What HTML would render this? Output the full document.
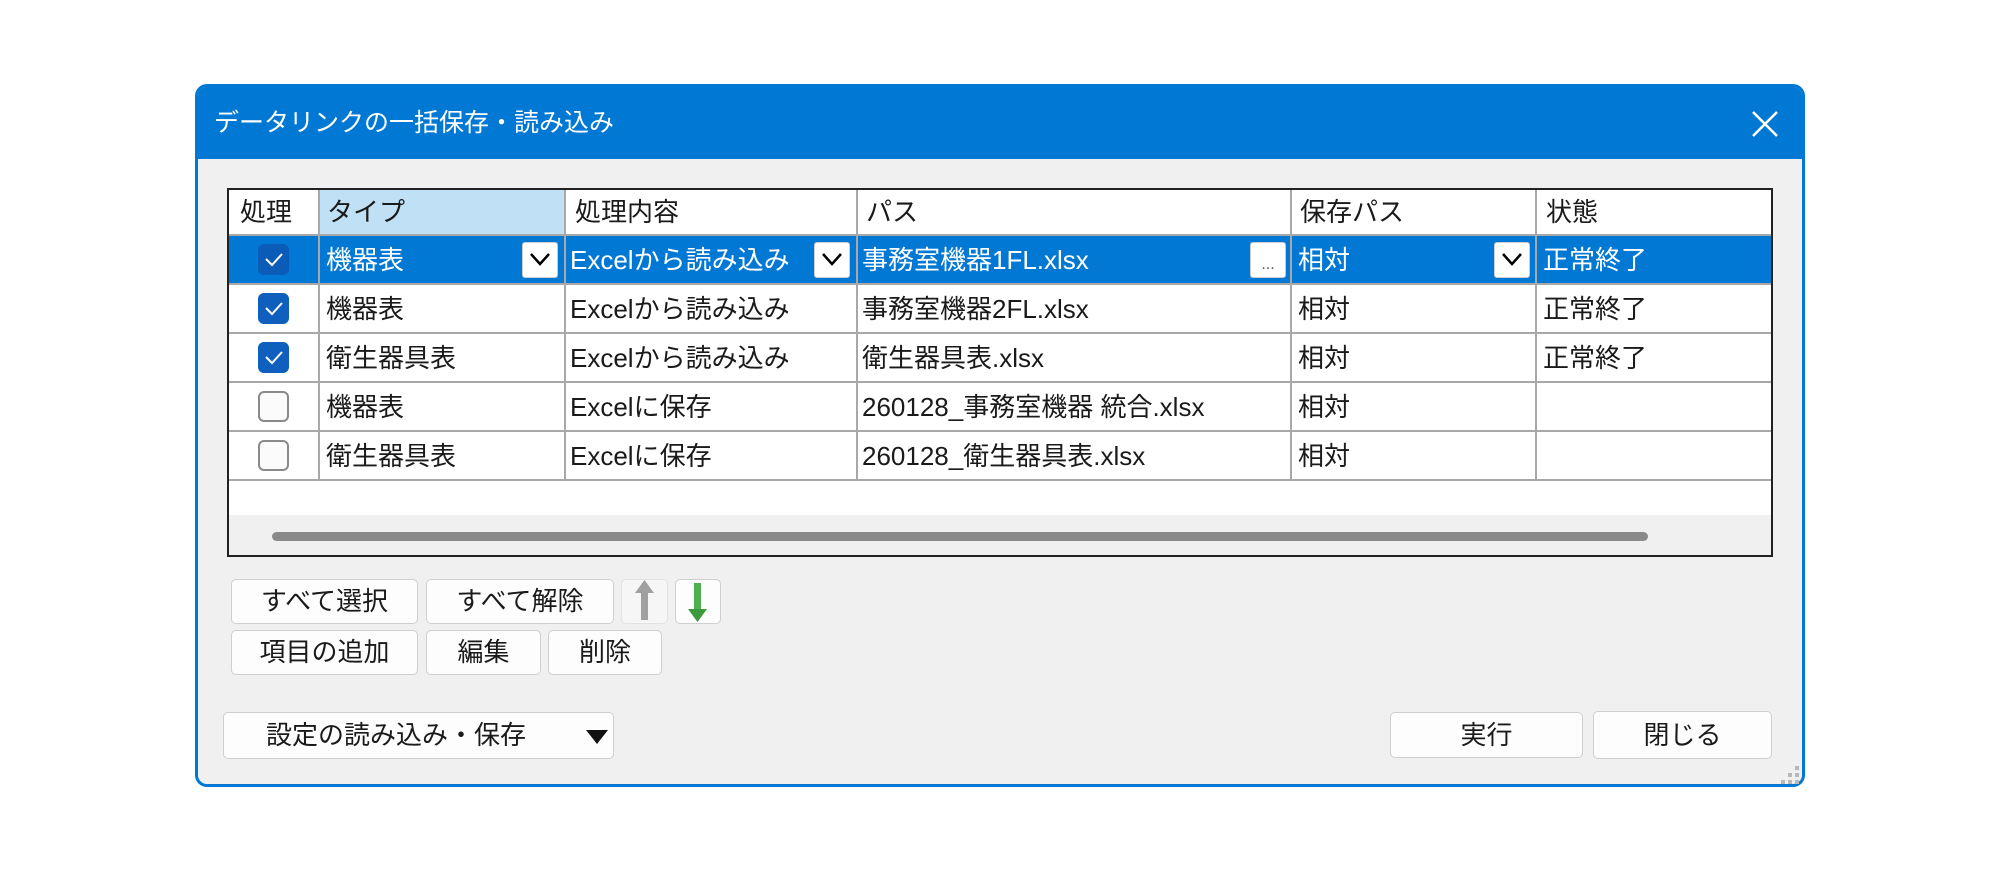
<!DOCTYPE html>
<html><head><meta charset="utf-8"><style>
*{box-sizing:border-box;margin:0;padding:0}
body{width:2000px;height:877px;background:#fff;position:relative;overflow:hidden;font-family:"Liberation Sans","Noto Sans CJK JP",sans-serif;color:#1a1a1a}
.a{position:absolute}
#dlg{left:195px;top:84px;width:1610px;height:703px;border:3px solid #0078d4;border-radius:12px;background:#f0f0f0;overflow:hidden}
#title{left:0;top:0;width:100%;height:72px;background:#0078d4;color:#fff;font-size:25px;line-height:72px;padding-left:16px}
.t{font-size:26px;line-height:48px;white-space:nowrap}
.vl{width:2px;background:#a8a8a8}
.hl{height:2px;background:#a8a8a8}
.cb{width:31px;height:31px;border-radius:6px}
.on{background:#0f5fbf}
.off{background:#fbfbfb;border:2px solid #8a8a8a}
.dd{width:36px;height:36px;background:#fff;border:1px solid #ccc;border-radius:3px}
.btn{background:#fdfdfd;border:1px solid #cfcfcf;border-radius:5px;font-size:26px;text-align:center;color:#1a1a1a}
</style></head><body>
<div class="a" id="dlg">
 <div class="a" id="title">データリンクの一括保存・読み込み</div>
 <svg class="a" style="left:1553px;top:23px" width="28" height="28"><path d="M2 2L26 26M26 2L2 26" stroke="#fff" stroke-width="2.5"/></svg>
</div>
<!-- table -->
<div class="a" style="left:227px;top:188px;width:1546px;height:369px;border:2px solid #222;background:#fff"></div>
<div class="a" style="left:319px;top:190px;width:246px;height:45px;background:#bfe0f5"></div>
<div class="a" style="left:229px;top:236px;width:1542px;height:48px;background:#0078d4"></div>
<div class="a" style="left:229px;top:515px;width:1542px;height:40px;background:#f0f0f0"></div>
<div class="a" style="left:272px;top:532px;width:1376px;height:9px;border-radius:5px;background:#8a8a8a"></div>
<!-- grid -->
<div class="a hl" style="left:229px;top:234px;width:1542px"></div>
<div class="a hl" style="left:229px;top:283px;width:1542px"></div>
<div class="a hl" style="left:229px;top:332px;width:1542px"></div>
<div class="a hl" style="left:229px;top:381px;width:1542px"></div>
<div class="a hl" style="left:229px;top:430px;width:1542px"></div>
<div class="a hl" style="left:229px;top:479px;width:1542px"></div>
<div class="a vl" style="left:318px;top:190px;height:291px"></div>
<div class="a vl" style="left:564px;top:190px;height:291px"></div>
<div class="a vl" style="left:856px;top:190px;height:291px"></div>
<div class="a vl" style="left:1290px;top:190px;height:291px"></div>
<div class="a vl" style="left:1535px;top:190px;height:291px"></div>
<!-- header -->
<div class="a t" style="left:240px;top:188px">処理</div>
<div class="a t" style="left:327px;top:188px">タイプ</div>
<div class="a t" style="left:575px;top:188px">処理内容</div>
<div class="a t" style="left:866px;top:188px">パス</div>
<div class="a t" style="left:1300px;top:188px">保存パス</div>
<div class="a t" style="left:1546px;top:188px">状態</div>
<!-- row1 -->
<div class="a cb" style="left:258px;top:244px;background:#0a5cb8"></div>
<div class="a t" style="left:326px;top:236px;color:#fff">機器表</div>
<div class="a t" style="left:570px;top:236px;color:#fff">Excelから読み込み</div>
<div class="a t" style="left:862px;top:236px;color:#fff">事務室機器1FL.xlsx</div>
<div class="a t" style="left:1298px;top:236px;color:#fff">相対</div>
<div class="a t" style="left:1543px;top:236px;color:#fff">正常終了</div>
<div class="a dd" style="left:522px;top:242px"></div>
<div class="a dd" style="left:814px;top:242px"></div>
<div class="a dd" style="left:1494px;top:242px"></div>
<div class="a dd" style="left:1250px;top:242px;text-align:center;font-size:16px;line-height:44px;color:#555">...</div>
<!-- row2-5 -->
<div class="a cb on" style="left:258px;top:293px"></div>
<div class="a t" style="left:326px;top:285px">機器表</div>
<div class="a t" style="left:570px;top:285px">Excelから読み込み</div>
<div class="a t" style="left:862px;top:285px">事務室機器2FL.xlsx</div>
<div class="a t" style="left:1298px;top:285px">相対</div>
<div class="a t" style="left:1543px;top:285px">正常終了</div>
<div class="a cb on" style="left:258px;top:342px"></div>
<div class="a t" style="left:326px;top:334px">衛生器具表</div>
<div class="a t" style="left:570px;top:334px">Excelから読み込み</div>
<div class="a t" style="left:862px;top:334px">衛生器具表.xlsx</div>
<div class="a t" style="left:1298px;top:334px">相対</div>
<div class="a t" style="left:1543px;top:334px">正常終了</div>
<div class="a cb off" style="left:258px;top:391px"></div>
<div class="a t" style="left:326px;top:383px">機器表</div>
<div class="a t" style="left:570px;top:383px">Excelに保存</div>
<div class="a t" style="left:862px;top:383px">260128_事務室機器 統合.xlsx</div>
<div class="a t" style="left:1298px;top:383px">相対</div>
<div class="a cb off" style="left:258px;top:440px"></div>
<div class="a t" style="left:326px;top:432px">衛生器具表</div>
<div class="a t" style="left:570px;top:432px">Excelに保存</div>
<div class="a t" style="left:862px;top:432px">260128_衛生器具表.xlsx</div>
<div class="a t" style="left:1298px;top:432px">相対</div>
<!-- buttons -->
<div class="a btn" style="left:231px;top:579px;width:187px;height:45px;line-height:43px">すべて選択</div>
<div class="a btn" style="left:426px;top:579px;width:188px;height:45px;line-height:43px">すべて解除</div>
<div class="a btn" style="left:621px;top:579px;width:47px;height:45px;background:#f6f6f6;border-color:#e2e2e2"></div>
<div class="a btn" style="left:675px;top:579px;width:46px;height:45px"></div>
<div class="a btn" style="left:231px;top:630px;width:187px;height:45px;line-height:43px">項目の追加</div>
<div class="a btn" style="left:426px;top:630px;width:115px;height:45px;line-height:43px">編集</div>
<div class="a btn" style="left:548px;top:630px;width:114px;height:45px;line-height:43px">削除</div>
<div class="a btn" style="left:223px;top:712px;width:391px;height:47px;line-height:45px;text-align:left;padding-left:42px">設定の読み込み・保存</div>
<div class="a btn" style="left:1390px;top:712px;width:193px;height:46px;line-height:44px">実行</div>
<div class="a btn" style="left:1593px;top:711px;width:179px;height:48px;line-height:46px">閉じる</div>
<svg class="a" style="left:0;top:0" width="2000" height="877" fill="none">
 <g stroke="#fff" stroke-width="2"><path d="M266 259l6 6 10-11"/><path d="M266 308l6 6 10-11"/><path d="M266 357l6 6 10-11"/></g>
 <g stroke="#000" stroke-width="2.5"><path d="M531 254l9 10 9-10"/><path d="M823 254l9 10 9-10"/><path d="M1503 254l9 10 9-10"/></g>
 <rect x="641" y="590" width="7" height="30" fill="#a0a0a0"/><path d="M635 593l9.5-13 9.5 13z" fill="#a0a0a0"/>
 <rect x="694" y="583" width="7" height="28" fill="#4caf50"/><path d="M688 609l9.5 13 9.5-13z" fill="#3c9a3c"/>
 <path d="M586 730h22l-11 14z" fill="#111"/>
 <g fill="#b8b8b8"><rect x="1795" y="766" width="4" height="4"/><rect x="1795" y="773" width="4" height="4"/><rect x="1788" y="773" width="4" height="4"/><rect x="1795" y="780" width="4" height="4"/><rect x="1788" y="780" width="4" height="4"/><rect x="1781" y="780" width="4" height="4"/></g>
</svg>
</body></html>
